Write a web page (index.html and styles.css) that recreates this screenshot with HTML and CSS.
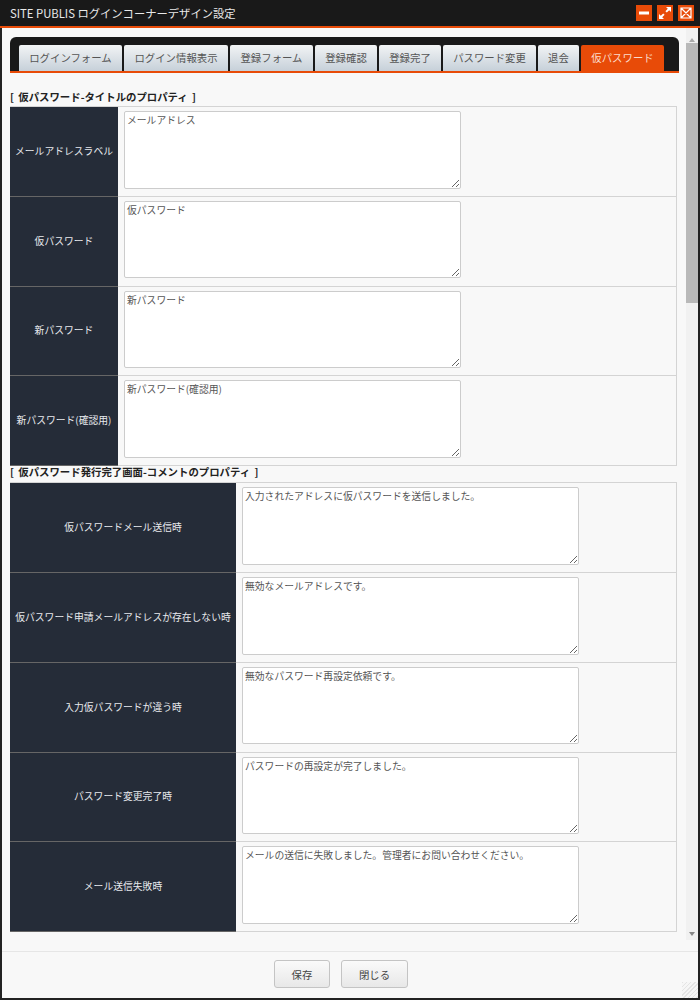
FILE: index.html
```html
<!DOCTYPE html>
<html lang="ja">

<head>
    <meta charset="UTF-8">
    <title>SITE PUBLIS ログインコーナーデザイン設定</title>
    <link rel="stylesheet" href="styles.css">
</head>

<body>
    <div class="Window">
        <div class="TitleBar">
            <span class="TitleText">SITE PUBLIS ログインコーナーデザイン設定</span>
            <div class="WinBtns">
                <span class="WinBtn"><svg width="16" height="16" viewBox="0 0 16 16"><rect x="3" y="6.5" width="10" height="3" fill="#fff"/></svg></span>
                <span class="WinBtn"><svg width="16" height="16" viewBox="0 0 16 16"><path d="M9 2h5v5l-1.8-1.8-2.4 2.4-1.4-1.4 2.4-2.4zM7 14H2V9l1.8 1.8 2.4-2.4 1.4 1.4-2.4 2.4z" fill="#fff"/></svg></span>
                <span class="WinBtn"><svg width="16" height="16" viewBox="0 0 16 16"><path d="M3 3h10v10H3zM3 3l10 10M13 3L3 13" fill="none" stroke="#fff" stroke-width="1.2"/></svg></span>
            </div>
        </div>
        <div class="Middle">
            <div class="Content">
                <div class="TabBar">
                    <a class="Tab t1">ログインフォーム</a>
                    <a class="Tab t2">ログイン情報表示</a>
                    <a class="Tab t3">登録フォーム</a>
                    <a class="Tab t4">登録確認</a>
                    <a class="Tab t5">登録完了</a>
                    <a class="Tab t6">パスワード変更</a>
                    <a class="Tab t7">退会</a>
                    <a class="Tab t8 active">仮パスワード</a>
                </div>
                <h3 class="SecTitle first">[ 仮パスワード-タイトルのプロパティ ]</h3>
                <table class="PropTable narrow">
                    <tr><th>メールアドレスラベル</th><td><textarea>メールアドレス</textarea></td></tr>
                    <tr><th>仮パスワード</th><td><textarea>仮パスワード</textarea></td></tr>
                    <tr><th>新パスワード</th><td><textarea>新パスワード</textarea></td></tr>
                    <tr><th>新パスワード(確認用)</th><td><textarea>新パスワード(確認用)</textarea></td></tr>
                </table>
                <h3 class="SecTitle">[ 仮パスワード発行完了画面-コメントのプロパティ ]</h3>
                <table class="PropTable wide">
                    <tr><th>仮パスワードメール送信時</th><td><textarea>入力されたアドレスに仮パスワードを送信しました。</textarea></td></tr>
                    <tr><th>仮パスワード申請メールアドレスが存在しない時</th><td><textarea>無効なメールアドレスです。</textarea></td></tr>
                    <tr><th>入力仮パスワードが違う時</th><td><textarea>無効なパスワード再設定依頼です。</textarea></td></tr>
                    <tr><th>パスワード変更完了時</th><td><textarea>パスワードの再設定が完了しました。</textarea></td></tr>
                    <tr><th>メール送信失敗時</th><td><textarea>メールの送信に失敗しました。管理者にお問い合わせください。</textarea></td></tr>
                </table>
            </div>
            <div class="ScrollBar">
                <span class="ArrowUp"></span>
                <div class="Track"><div class="Thumb"></div></div>
                <span class="ArrowDown"></span>
            </div>
        </div>
        <div class="Footer">
            <button class="Btn save">保存</button>
            <button class="Btn close">閉じる</button>
            <span class="Grip"></span>
        </div>
    </div>
</body>

</html>
```

FILE: styles.css
```css
* {
    box-sizing: border-box;
}

body {
    margin: 0;
    font-family: "Noto Sans CJK JP", "Liberation Sans", sans-serif;
    font-size: 10px;
    color: #333;
}

.Window {
    width: 700px;
    height: 1000px;
    display: flex;
    flex-direction: column;
    background-color: #f8f8f8;
    border: 2px solid #222;
    border-top: 0;
}

.TitleBar {
    height: 28px;
    flex-shrink: 0;
    background-color: #191919;
    border-bottom: 2px solid #e84b08;
    display: flex;
    justify-content: space-between;
    align-items: center;
    margin: 0 -2px;
    padding: 0 6px 0 10px;
}

.TitleText {
    color: #e8e8e8;
    font-size: 11.3px;
}

.WinBtns {
    display: flex;
    gap: 5px;
}

.WinBtn {
    width: 16px;
    height: 16px;
    background-color: #e84b08;
    display: block;
}

.WinBtn svg {
    display: block;
}

.Middle {
    flex: 1;
    display: flex;
    min-height: 0;
    overflow: hidden;
}

.Content {
    width: 684px;
    padding: 9px 7px 0 8px;
    flex-shrink: 0;
}

.TabBar {
    height: 36px;
    background-color: #191919;
    border-radius: 6px 6px 0 0;
    border-bottom: 2px solid #e84b08;
    display: flex;
    align-items: flex-end;
    padding-left: 9px;
    gap: 2px;
}

.Tab {
    height: 26px;
    padding-bottom: 2px;
    display: flex;
    align-items: center;
    justify-content: center;
    color: #555;
    background: linear-gradient(#f2f4f5, #c6d0d9);
    border-radius: 2px 2px 0 0;
    font-size: 10.4px;
}

.Tab.active {
    color: #fbdccb;
    background: #e84b08;
}

.t1 { width: 103px; }
.t2 { width: 104px; }
.t3 { width: 83px; }
.t4 { width: 62px; }
.t5 { width: 62px; }
.t6 { width: 93px; }
.t7 { width: 41px; }
.t8 { width: 83px; }

.SecTitle {
    margin: 0;
    height: 16px;
    line-height: 12px;
    font-size: 10.4px;
    font-weight: bold;
    word-spacing: 2px;
    color: #222;
}

.SecTitle.first {
    height: 15px;
    margin-top: 18px;
}

.PropTable {
    width: 667px;
    border-collapse: separate;
    border-spacing: 0;
    table-layout: fixed;
    border-top: 1px solid #d4d4d4;
    border-right: 1px solid #d4d4d4;
}

.PropTable tr {
    height: 89.8px;
}

.PropTable th {
    background-color: #252c38;
    color: #e8eaee;
    font-size: 9.8px;
    font-weight: normal;
    text-align: center;
    padding: 0 0 1px;
    border-bottom: 1px solid #666;
}

.PropTable td {
    padding: 4px 5px 0 6px;
    vertical-align: top;
    border-bottom: 1px solid #d4d4d4;
}

.narrow th {
    width: 108px;
}

.wide th {
    width: 226px;
}

.PropTable textarea {
    display: block;
    width: 337px;
    height: 77.7px;
    margin: 0;
    padding: 1px 2px;
    background-color: #fff;
    border: 1px solid #ccc;
    border-radius: 2px;
    font-family: "Noto Sans CJK JP", "Liberation Sans", sans-serif;
    font-size: 9.8px;
    color: #555;
}

.ScrollBar {
    width: 12px;
    padding-top: 9px;
    display: flex;
    flex-direction: column;
    align-items: center;
    background-color: #f1f1f1;
    height: 912px;
}

.ArrowUp,
.ArrowDown {
    width: 0;
    height: 0;
    border-left: 3px solid transparent;
    border-right: 3px solid transparent;
    flex-shrink: 0;
}

.ArrowUp {
    border-bottom: 4px solid #aaa;
    margin: 1px 0;
}

.ArrowDown {
    border-top: 4px solid #888;
    margin: 2px 0 4px;
}

.Track {
    flex: 1;
    width: 100%;
}

.Thumb {
    height: 260px;
    background-color: #b9b9b9;
}

.Footer {
    height: 47px;
    flex-shrink: 0;
    border-top: 1px solid #e6e6e6;
    display: flex;
    justify-content: center;
    gap: 11px;
    padding: 8px 18px 0 0;
    position: relative;
}

.Btn {
    height: 28px;
    border: 1px solid #c4c4c4;
    border-radius: 3px;
    background: linear-gradient(#fafafa, #e8e8e8);
    font-family: "Noto Sans CJK JP", "Liberation Sans", sans-serif;
    font-size: 10.4px;
    color: #444;
    padding: 0;
}

.save {
    width: 56px;
}

.close {
    width: 67px;
}

.Grip {
    position: absolute;
    right: 0;
    bottom: 0;
    width: 16px;
    height: 16px;
    background: repeating-linear-gradient(135deg, #e4e4e4 0 1px, #f6f6f6 1px 3px);
}
```
